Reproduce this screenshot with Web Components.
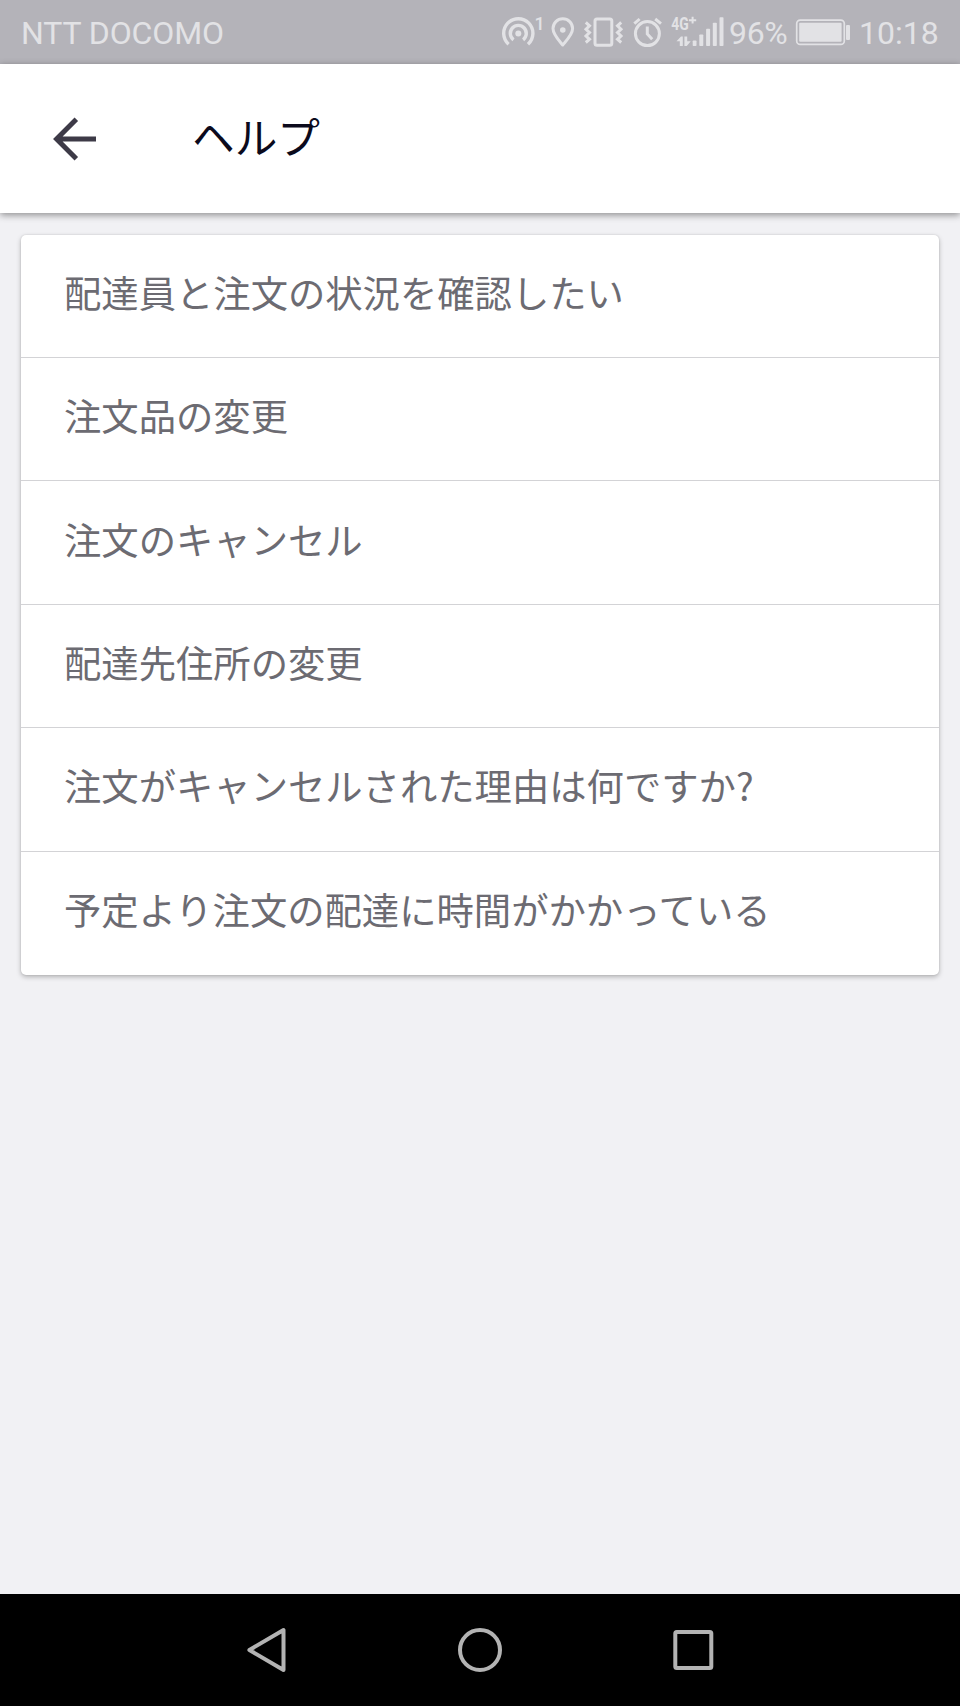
<!DOCTYPE html>
<html lang="ja">
<head>
<meta charset="utf-8">
<meta name="viewport" content="width=device-width, initial-scale=1">
<title>ヘルプ</title>
<style>
    :root {
        --page-bg: #f1f1f4;
        --status-bg: #b4b3b9;
        --status-color: #e2e2e5;
        --title-color: #0b0a1c;
        --text-color: #6c6b72;
        --divider-color: #d3d3d6;
    }
    body {
        margin: 0;
        background: var(--page-bg);
        font-family: "Noto Sans CJK JP", sans-serif;
    }
</style>
</head>
<body>
<help-screen>
    <status-bar slot="status" carrier="NTT DOCOMO" battery="96%" time="10:18"></status-bar>
    <app-bar slot="header">ヘルプ</app-bar>
    <help-list>
        <help-item>配達員と注文の状況を確認したい</help-item>
        <help-item>注文品の変更</help-item>
        <help-item>注文のキャンセル</help-item>
        <help-item>配達先住所の変更</help-item>
        <help-item>注文がキャンセルされた理由は何ですか?</help-item>
        <help-item>予定より注文の配達に時間がかかっている</help-item>
    </help-list>
    <nav-bar slot="nav"></nav-bar>
</help-screen>

<script>
function attach(el, html) {
    const template = document.createElement('template');
    template.innerHTML = html;
    el.attachShadow({ mode: 'open' }).appendChild(template.content.cloneNode(true));
}

class HelpScreen extends HTMLElement {
    constructor() {
        super();
        attach(this, `
            <style>
                :host {
                    display: flex;
                    flex-direction: column;
                    height: 1706px;
                    overflow: hidden;
                }
                main {
                    flex: 1;
                    padding: 21.6px 21.33px;
                }
            </style>
            <slot name="status"></slot>
            <slot name="header"></slot>
            <main><slot></slot></main>
            <slot name="nav"></slot>
        `);
    }
}

class StatusBar extends HTMLElement {
    constructor() {
        super();
        attach(this, `
            <style>
                :host {
                    display: flex;
                    align-items: center;
                    box-sizing: border-box;
                    height: 64px;
                    padding: 0 21px;
                    background: var(--status-bg);
                    color: var(--status-color);
                    font: 32px/64px Roboto, sans-serif;
                    white-space: nowrap;
                }
                .carrier { flex: 1; padding-top: 2px; letter-spacing: -0.1px; }
                .battery, .time { padding-top: 2px; }
                .battery { width: 64px; padding-left: 1px; letter-spacing: -0.3px; }
                .time { width: 80px; }
                svg {
                    display: block;
                    fill: none;
                    stroke: currentColor;
                    stroke-width: 3;
                }
                .fill { fill: currentColor; stroke: none; }
            </style>
            <span class="carrier"></span>
            <!-- hotspot -->
            <svg width="50" height="64" viewBox="500 0 50 64">
                <path stroke-width="3.4" d="M508.6 44.2A14.6 14.6 0 1 1 528 44.2"/>
                <path stroke-width="3.4" d="M513.5 39.8A8 8 0 1 1 523.1 39.8"/>
                <circle class="fill" cx="518.3" cy="33.4" r="3"/>
                <text class="fill" x="534.5" y="30" font-size="18" font-weight="500">1</text>
            </svg>
            <!-- location -->
            <svg width="30" height="64" viewBox="550 0 30 64">
                <path stroke-linejoin="round" d="M562.7 45C559 40.5 553 34.5 553 28.5A9.8 9.8 0 0 1 572.6 28.5C572.6 34.5 566.4 40.5 562.7 45Z"/>
                <circle class="fill" cx="562.8" cy="30" r="2.8"/>
            </svg>
            <!-- vibrate -->
            <svg width="48" height="64" viewBox="580 0 48 64">
                <rect x="595" y="19" width="16.8" height="26.2" rx="2"/>
                <path d="M585.8 22.3L589.5 25.8 586 29.3 589.5 32.6 586 36 589.5 39.3 585.8 42.5M621.2 22.3L617.5 25.8 621 29.3 617.5 32.6 621 36 617.5 39.3 621.2 42.5"/>
            </svg>
            <!-- alarm -->
            <svg width="42" height="64" viewBox="628 0 42 64">
                <circle cx="647.4" cy="33.6" r="12"/>
                <path d="M647.3 26.5V34L652.2 39.2M634.3 23.7L639.6 19M655.2 19L661 23.7"/>
            </svg>
            <!-- signal -->
            <svg width="58" height="64" viewBox="670 0 58 64">
                <g class="fill">
                    <text transform="translate(671.3 30.3) scale(.73 1)" font-size="19" font-weight="700">4G</text>
                    <path d="M689 19.2h2.6v-2.4h2v2.4h2.6v2h-2.6v2.4h-2v-2.4H689z"/>
                    <path d="M676.5 41.3L681 36.5H682.8V46H679.8V41.3ZM684.4 36.5H687.2V41.2H690.7L686.8 46H684.4Z"/>
                    <rect x="692.7" y="40.5" width="3.8" height="5.5" rx=".8"/>
                    <rect x="699.3" y="34.5" width="4" height="11.5" rx=".8"/>
                    <rect x="706.1" y="28.7" width="4" height="17.3" rx=".8"/>
                    <rect x="712.8" y="22.8" width="4" height="23.2" rx=".8"/>
                    <rect x="719.5" y="17.3" width="4" height="28.7" rx=".8"/>
                </g>
            </svg>
            <span class="battery"></span>
            <svg width="66" height="64" viewBox="793 0 66 64">
                <rect x="796.7" y="20.2" width="47.6" height="24.2" rx="3.5" stroke-width="1.7"/>
                <rect class="fill" x="799.2" y="22.8" width="42.4" height="19" rx="1"/>
                <rect class="fill" x="846" y="25" width="4" height="15" rx="1"/>
            </svg>
            <span class="time"></span>
        `);
    }

    connectedCallback() {
        ['carrier', 'battery', 'time'].forEach(name => {
            this.shadowRoot.querySelector('.' + name).textContent = this.getAttribute(name);
        });
    }
}

class AppBar extends HTMLElement {
    constructor() {
        super();
        attach(this, `
            <style>
                :host {
                    display: grid;
                    grid-template-columns: 139px 1fr;
                    align-items: center;
                    box-sizing: border-box;
                    height: 149px;
                    padding-left: 53px;
                    background: #fff;
                    box-shadow: 0 2px 7px rgba(0, 0, 0, 0.42);
                }
                svg { display: block; }
                h1 {
                    margin: 0;
                    padding-bottom: 5px;
                    color: var(--title-color);
                    font-size: 42.67px;
                    font-weight: 400;
                    line-height: 64px;
                }
            </style>
            <svg width="44" height="44" viewBox="0 0 44 44" fill="none" stroke="#3d3a47" stroke-width="5">
                <path d="M23.3 2.3L3.6 22 23.3 41.7M4 22H43"/>
            </svg>
            <h1><slot></slot></h1>
        `);
    }
}

class HelpList extends HTMLElement {
    constructor() {
        super();
        attach(this, `
            <style>
                :host {
                    display: flex;
                    flex-direction: column;
                    background: #fff;
                    border-radius: 5px;
                    box-shadow: 0 2px 5px rgba(0, 0, 0, 0.26), 0 0 2px rgba(0, 0, 0, 0.12);
                }
                ::slotted(:not(:last-child)) {
                    border-bottom: 1px solid var(--divider-color);
                }
            </style>
            <slot></slot>
        `);
    }
}

class HelpItem extends HTMLElement {
    constructor() {
        super();
        attach(this, `
            <style>
                :host {
                    display: flex;
                    align-items: center;
                    box-sizing: border-box;
                    height: 123.4px;
                    padding: 0 42.67px 8px;
                    color: var(--text-color);
                    font-size: 37.33px;
                    line-height: 56px;
                    white-space: nowrap;
                }
            </style>
            <slot></slot>
        `);
    }
}

class NavBar extends HTMLElement {
    constructor() {
        super();
        attach(this, `
            <style>
                :host {
                    display: flex;
                    justify-content: center;
                    align-items: center;
                    gap: 165.5px;
                    height: 112px;
                    background: #000;
                }
                svg {
                    fill: none;
                    stroke: #b3b3b3;
                    stroke-width: 4;
                    stroke-linejoin: round;
                }
            </style>
            <svg width="48" height="48" viewBox="0 0 48 48"><path d="M40.5 4V44L6.4 24Z"/></svg>
            <svg width="48" height="48" viewBox="0 0 48 48"><circle cx="24" cy="24" r="20"/></svg>
            <svg width="48" height="48" viewBox="0 0 48 48"><rect x="5.3" y="6" width="36" height="36" rx="1.5"/></svg>
        `);
    }
}

customElements.define('help-screen', HelpScreen);
customElements.define('status-bar', StatusBar);
customElements.define('app-bar', AppBar);
customElements.define('help-list', HelpList);
customElements.define('help-item', HelpItem);
customElements.define('nav-bar', NavBar);
</script>
</body>
</html>
